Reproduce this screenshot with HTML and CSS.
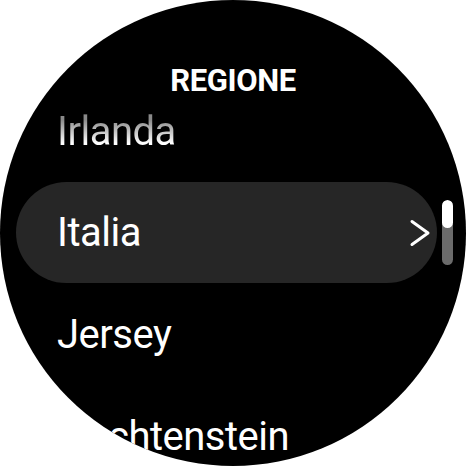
FILE: index.html
```html
<!DOCTYPE html>
<html lang="it">
<head>
<meta charset="utf-8">
<link rel="stylesheet" href="styles.css">
</head>
<body>
<div class="watch">
  <div class="title">REGIONE</div>
  <div class="list">
    <div class="row"><span class="label fade">Irlanda</span></div>
    <div class="row selected">
      <span class="label">Italia</span>
      <svg class="chev" width="22" height="28" viewBox="0 0 22 28"><path d="M3 2.5 L19 14 L3 25.5" fill="none" stroke="#fff" stroke-width="3" stroke-linecap="round" stroke-linejoin="round"/></svg>
    </div>
    <div class="row"><span class="label">Jersey</span></div>
    <div class="row"><span class="label">Liechtenstein</span></div>
  </div>
  <div class="scrollbar"><div class="thumb"></div></div>
</div>
</body>
</html>
```
FILE: styles.css
```css
html, body {
  margin: 0;
  padding: 0;
  background: #fff;
}
.watch {
  position: relative;
  width: 466px;
  height: 466px;
  border-radius: 50%;
  overflow: hidden;
  background: #000;
  font-family: Roboto, "Liberation Sans", sans-serif;
  color: #fff;
}
.title {
  height: 80px;
  box-sizing: border-box;
  padding-top: 63px;
  line-height: 36px;
  font-size: 31px;
  font-weight: 700;
  text-align: center;
  letter-spacing: -0.4px;
}
.list {
  display: flex;
  flex-direction: column;
}
.row {
  height: 102px;
  margin-left: 16px;
  width: 421px;
  box-sizing: border-box;
  padding-left: 41px;
  padding-right: 6px;
  display: flex;
  align-items: center;
  justify-content: space-between;
  font-size: 40px;
  letter-spacing: -0.5px;
  flex-shrink: 0;
  white-space: nowrap;
}
.row.selected {
  background: #262626;
  border-radius: 51px;
  height: 101px;
}
.fade {
  background: linear-gradient(180deg, #8a8a8a 25%, #ffffff 75%);
  -webkit-background-clip: text;
  background-clip: text;
  color: transparent;
}
.chev {
  display: block;
}
.scrollbar {
  position: absolute;
  left: 442px;
  top: 200px;
  width: 11px;
  height: 65px;
  border-radius: 6px;
  background: #6b6b6b;
  overflow: hidden;
}
.thumb {
  height: 28px;
  background: #fff;
  border-radius: 6px;
}
```
